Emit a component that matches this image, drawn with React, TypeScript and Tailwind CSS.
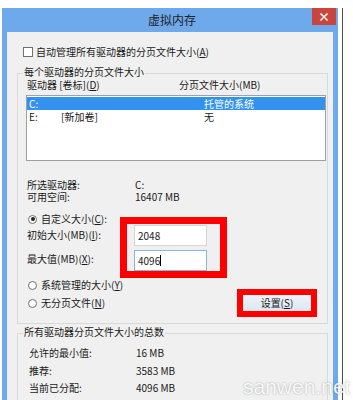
import React from "react";

const U = ({ children }: { children: React.ReactNode }) => (
    <span className="underline underline-offset-1">{children}</span>
);

function Radio({ checked }: { checked?: boolean }) {
    return (
        <span className="w-[9px] h-[9px] rounded-full border border-[#707070] bg-white flex items-center justify-center shrink-0">
            {checked && <span className="w-[4px] h-[4px] rounded-full bg-[#222]" />}
        </span>
    );
}

export default function App() {
    return (
        <div className="relative w-[353px] h-[400px] overflow-hidden bg-white flex pt-[8px] pl-[2px] text-[10px] leading-[12px] text-[#1a1a1a] font-['Noto_Sans_CJK_SC',sans-serif]">
            {/* window frame */}
            <div className="w-[336px] bg-[#6ea9ec] flex flex-col shrink-0">
                <div className="h-[24px] flex shrink-0">
                    <div className="flex-1 text-center text-[12px] leading-[24px] text-[#222] pl-[30px]">虚拟内存</div>
                    <div className="w-[24px] h-[17px] mr-[2px] bg-[#c9463d] flex items-center justify-center text-white text-[12px] leading-none font-bold">×</div>
                </div>

                <div className="flex-1 mx-[5px] bg-[#f0f0f0] pt-[14px]">
                    <div className="h-[12px] pl-[16px] flex items-center gap-[3px]">
                        <span className="w-[10px] h-[10px] border border-[#707070] bg-white shrink-0" />
                        <span>自动管理所有驱动器的分页文件大小(<U>A</U>)</span>
                    </div>

                    {/* per-drive group */}
                    <div className="relative mt-[15px] ml-[10px] w-[311px] border border-[#d9d9d9] pb-[6px]">
                        <span className="absolute top-[-8px] left-[5px] px-[1px] bg-[#f0f0f0]">每个驱动器的分页文件大小</span>

                        <div className="mt-[5px] h-[12px] flex">
                            <span className="w-[161px] pl-[9px]">驱动器 [卷标](<U>D</U>)</span>
                            <span>分页文件大小(MB)</span>
                        </div>

                        <div className="mt-[4px] ml-[8px] w-[300px] h-[66px] border border-[#a0a0a0] bg-white pt-[1px]">
                            <div className="h-[13px] flex items-center bg-[#3391f0] text-white">
                                <span className="w-[34px] pl-[2px]">C:</span>
                                <span className="w-[143px]"></span>
                                <span>托管的系统</span>
                            </div>
                            <div className="h-[13px] flex items-center">
                                <span className="w-[34px] pl-[2px]">E:</span>
                                <span className="w-[143px]">[新加卷]</span>
                                <span>无</span>
                            </div>
                        </div>

                        <div className="mt-[18px] h-[12px] flex">
                            <span className="w-[117px] pl-[9px]">所选驱动器:</span>
                            <span>C:</span>
                        </div>
                        <div className="h-[12px] flex">
                            <span className="w-[117px] pl-[9px]">可用空间:</span>
                            <span>16407 MB</span>
                        </div>

                        <div className="flex">
                            <div className="w-[102px] pl-[9px] flex flex-col">
                                <div className="mt-[10px] h-[12px] pl-[1px] flex items-center gap-[4px]">
                                    <Radio checked />
                                    <span>自定义大小(<U>C</U>):</span>
                                </div>
                                <div className="mt-[4px] h-[12px]">初始大小(MB)(<U>I</U>):</div>
                                <div className="mt-[12px] h-[12px]">最大值(MB)(<U>X</U>):</div>
                            </div>
                            <div className="mt-[14px] w-[107px] h-[61px] border-[7px] border-[#ff0000] pl-[7px] pt-[1px] flex flex-col gap-[4px]">
                                <div className="w-[73px] h-[21px] bg-white border border-[#d6d6d6] pl-[3px] flex items-center">2048</div>
                                <div className="w-[73px] h-[21px] bg-white border border-[#86b6e6] pl-[3px] flex items-center">
                                    4096<span className="w-px h-[11px] bg-black" />
                                </div>
                            </div>
                        </div>

                        <div className="flex">
                            <div className="pl-[10px] flex flex-col">
                                <div className="mt-[1px] h-[12px] flex items-center gap-[4px]">
                                    <Radio />
                                    <span>系统管理的大小(<U>Y</U>)</span>
                                </div>
                                <div className="mt-[6px] h-[12px] flex items-center gap-[4px]">
                                    <Radio />
                                    <span>无分页文件(<U>N</U>)</span>
                                </div>
                            </div>
                            <div className="ml-auto mr-[10px] mt-[11px] w-[80px] h-[28px] border-[6px] border-[#ff0000] bg-linear-to-b from-[#eef4fa] to-[#dbe7f3] flex items-center justify-center">
                                <span>设置(<U>S</U>)</span>
                            </div>
                        </div>
                    </div>

                    {/* totals group */}
                    <div className="relative mt-[9px] ml-[10px] w-[311px] h-[80px] border-t border-l border-r border-[#d9d9d9]">
                        <span className="absolute top-[-8px] left-[5px] px-[1px] bg-[#f0f0f0]">所有驱动器分页文件大小的总数</span>
                        <div className="mt-[13px] h-[12px] flex">
                            <span className="w-[118px] pl-[11px]">允许的最小值:</span>
                            <span>16 MB</span>
                        </div>
                        <div className="mt-[6px] h-[12px] flex">
                            <span className="w-[118px] pl-[11px]">推荐:</span>
                            <span>3583 MB</span>
                        </div>
                        <div className="mt-[5px] h-[12px] flex">
                            <span className="w-[118px] pl-[11px]">当前已分配:</span>
                            <span>4096 MB</span>
                        </div>
                    </div>
                </div>
            </div>

            <div className="ml-[4px] w-px bg-[#4d4d4d] shrink-0" />

            {/* watermark */}
            <span className="absolute left-[243px] top-[376px] text-[21px] leading-[21px] font-['Liberation_Sans',sans-serif] text-white/90 [text-shadow:0_0_2px_rgba(0,0,0,0.35)]">sanwen.net</span>
        </div>
    );
}
